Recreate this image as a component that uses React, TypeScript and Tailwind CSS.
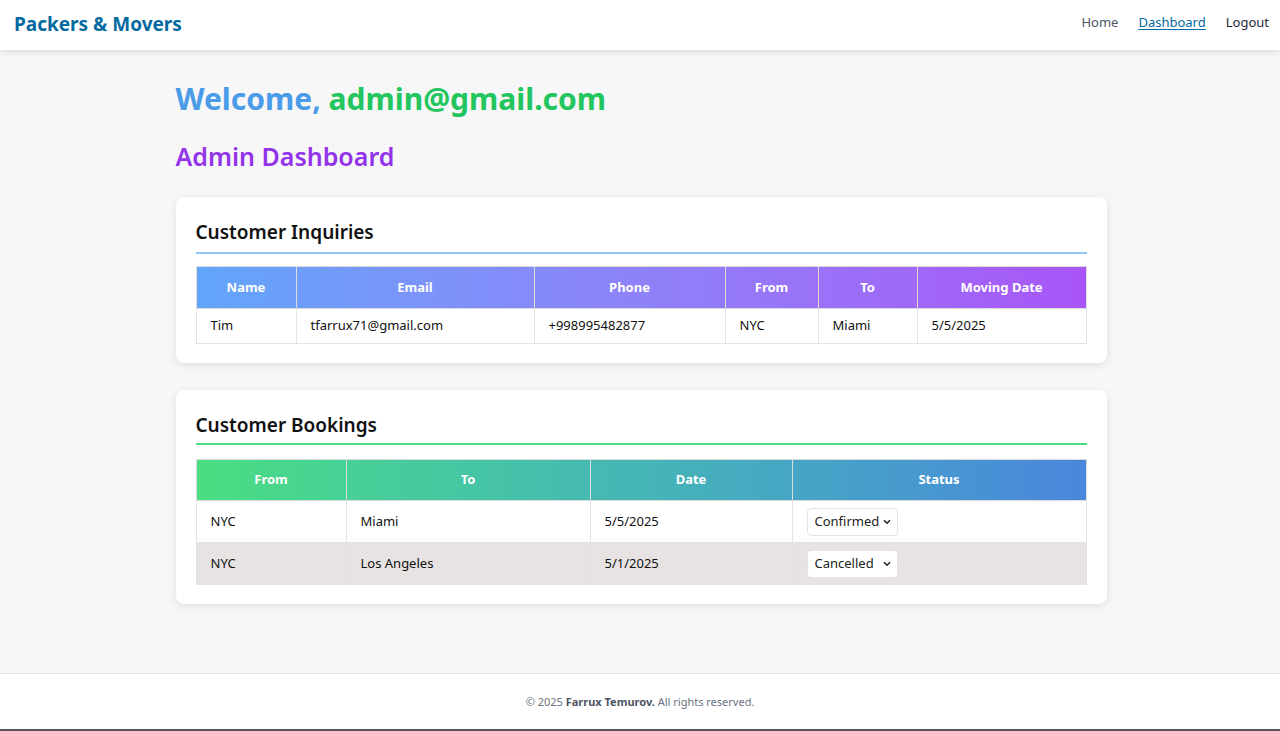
const inquiries = [
  { name: "Tim", email: "tfarrux71@gmail.com", phone: "+998995482877", from: "NYC", to: "Miami", date: "5/5/2025" },
];

const bookings = [
  { from: "NYC", to: "Miami", date: "5/5/2025", status: "Confirmed" },
  { from: "NYC", to: "Los Angeles", date: "5/1/2025", status: "Cancelled" },
];

function StatusSelect({ value }: { value: string }) {
  return (
    <div className="relative inline-block align-middle">
      <select
        defaultValue={value}
        className="h-[28px] w-[91px] appearance-none rounded border border-[#e3e3e3] bg-white pl-[7px] pr-[14px] text-[13px] text-[#222]"
      >
        <option>Pending</option>
        <option>Confirmed</option>
        <option>Cancelled</option>
      </select>
      <svg
        className="pointer-events-none absolute right-[7px] top-[11px]"
        width="8"
        height="6"
        viewBox="0 0 8 6"
      >
        <path d="M1 1.2 L4 4.2 L7 1.2" fill="none" stroke="#222" strokeWidth="1.6" />
      </svg>
    </div>
  );
}

export default function App() {
  return (
    <div
      className="flex min-h-[731px] flex-col bg-[#f7f7f7] text-[#111]"
      style={{ fontFamily: '"Noto Sans", "Open Sans", sans-serif' }}
    >
      {/* 顶部导航 */}
      <header className="relative z-10 flex h-[50px] items-center justify-between bg-white pb-[2px] pl-[14px] pr-[11px] shadow-[0_2px_6px_rgba(0,0,0,0.12)]">
        <span className="text-[19px] font-bold text-[#0369a1]">Packers &amp; Movers</span>
        <nav className="-mt-[2px] flex items-center gap-[20px] text-[13px]">
          <a className="text-[#4b5563]">Home</a>
          <a className="text-[#0369a1] underline underline-offset-2">Dashboard</a>
          <a className="text-[#1f2937]">Logout</a>
        </nav>
      </header>

      <main className="flex-1">
        <div className="mx-auto w-[931px] translate-x-[1px] pb-[69px] pt-[30px]">
          <h1 className="text-[30px] font-bold leading-[38px]">
            <span className="text-[#4a9be8]">Welcome, </span>
            <span className="text-[#22c55e]">admin@gmail.com</span>
          </h1>
          <h2 className="mt-[22px] text-[25px] font-semibold leading-[32px] text-[#9333ea]">Admin Dashboard</h2>

          {/* 客户咨询 */}
          <section className="mt-[25px] rounded-lg bg-white px-[20px] pb-[19px] pt-[21px] shadow-[0_2px_8px_rgba(0,0,0,0.1)]">
            <h3 className="border-b-2 border-[#93c5fd] pb-[6px] text-[19px] font-semibold leading-[28px]">
              Customer Inquiries
            </h3>
            <table className="mt-[12px] w-full border-collapse text-[13px]">
              <thead>
                <tr className="bg-gradient-to-r from-[#60a5fa] to-[#a855f7] text-white">
                  <th className="h-[42px] w-[100px] border border-[#dcdcdc] font-bold">Name</th>
                  <th className="w-[238px] border border-[#dcdcdc] font-bold">Email</th>
                  <th className="w-[191px] border border-[#dcdcdc] font-bold">Phone</th>
                  <th className="w-[93px] border border-[#dcdcdc] font-bold">From</th>
                  <th className="w-[99px] border border-[#dcdcdc] font-bold">To</th>
                  <th className="border border-[#dcdcdc] font-bold">Moving Date</th>
                </tr>
              </thead>
              <tbody>
                {inquiries.map((q) => (
                  <tr key={q.email} className="h-[35px]">
                    <td className="border border-[#e3e3e3] px-[14px]">{q.name}</td>
                    <td className="border border-[#e3e3e3] px-[14px]">{q.email}</td>
                    <td className="border border-[#e3e3e3] px-[14px]">{q.phone}</td>
                    <td className="border border-[#e3e3e3] px-[14px]">{q.from}</td>
                    <td className="border border-[#e3e3e3] px-[14px]">{q.to}</td>
                    <td className="border border-[#e3e3e3] px-[14px]">{q.date}</td>
                  </tr>
                ))}
              </tbody>
            </table>
          </section>

          {/* 客户预订 */}
          <section className="mt-[27px] rounded-lg bg-white px-[20px] pb-[19px] pt-[21px] shadow-[0_2px_8px_rgba(0,0,0,0.1)]">
            <h3 className="border-b-2 border-[#4ade80] pb-[4px] text-[19px] font-semibold leading-[28px]">
              Customer Bookings
            </h3>
            <table className="mt-[14px] w-full border-collapse text-[13px]">
              <thead>
                <tr className="bg-gradient-to-r from-[#4ade80] to-[#4a86dc] text-white">
                  <th className="h-[41px] w-[150px] border border-[#dcdcdc] font-bold">From</th>
                  <th className="w-[244px] border border-[#dcdcdc] font-bold">To</th>
                  <th className="w-[202px] border border-[#dcdcdc] font-bold">Date</th>
                  <th className="border border-[#dcdcdc] font-bold">Status</th>
                </tr>
              </thead>
              <tbody>
                {bookings.map((b, i) => (
                  <tr key={i} className={i % 2 === 1 ? "h-[42px] bg-[#e7e3e3]" : "h-[42px] bg-white"}>
                    <td className="border border-[#e3e3e3] px-[14px]">{b.from}</td>
                    <td className="border border-[#e3e3e3] px-[14px]">{b.to}</td>
                    <td className="border border-[#e3e3e3] px-[14px]">{b.date}</td>
                    <td className="border border-[#e3e3e3] px-[14px]">
                      <StatusSelect value={b.status} />
                    </td>
                  </tr>
                ))}
              </tbody>
            </table>
          </section>
        </div>
      </main>

      {/* 页脚 */}
      <footer className="flex h-[58px] items-center justify-center border-t border-[#e5e5e5] border-b-2 border-b-[#555] bg-white pt-[2px] text-[11px] text-[#6b7280]">
        <span>
          © 2025 <span className="font-bold text-[#4b5563]">Farrux Temurov.</span> All rights reserved.
        </span>
      </footer>
    </div>
  );
}
